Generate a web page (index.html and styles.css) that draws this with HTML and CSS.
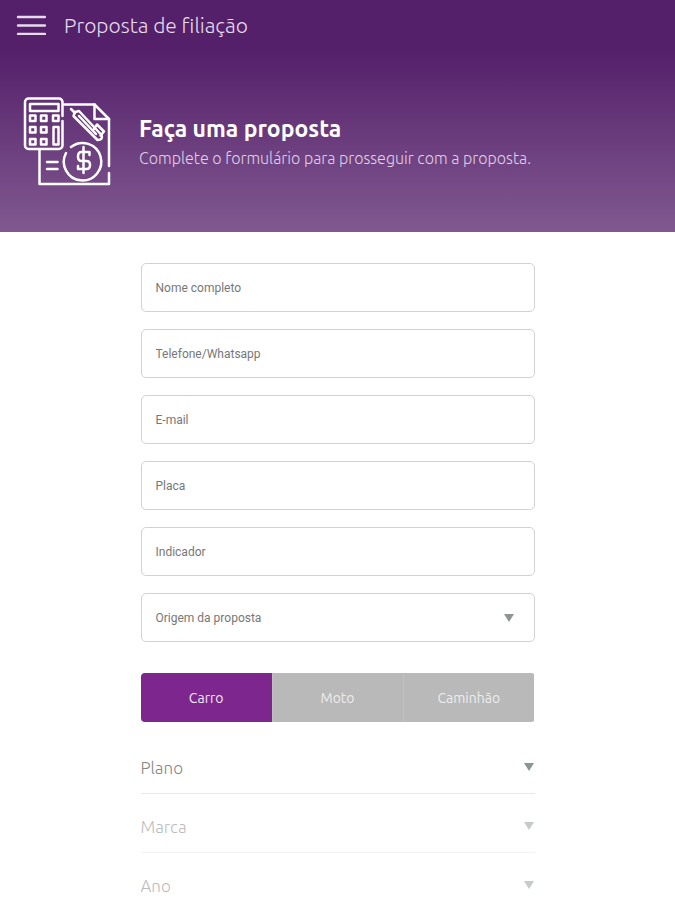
FILE: index.html
```html
<!DOCTYPE html>
<html lang="pt-BR">
<head>
  <meta charset="UTF-8" />
  <meta name="viewport" content="width=device-width, initial-scale=1.0"/>
  <title>Proposta de filiação</title>
  <link rel="stylesheet" href="styles.css">
</head>
<body>
  <header class="header">
    <div class="topbar">
      <button type="button" class="menu-button" aria-label="Menu">
        <svg width="30" height="20" viewBox="0 0 30 20" fill="none" stroke="currentColor" stroke-width="2.400" stroke-linecap="round">
          <path d="M2 2h27M2 10.500h27M2 19h27"/>
        </svg>
      </button>
      <h1 class="page-title">Proposta de filiação</h1>
    </div>

    <div class="hero">
      <svg class="hero-icon" width="88" height="90" viewBox="0 0 88 90" fill="none" stroke="currentColor" stroke-width="2.500" stroke-linecap="round" stroke-linejoin="round">
        <!-- calculator -->
        <path d="M39.500 20V6a3.500 3.500 0 0 0-3.500-3.500H5.500A3.500 3.500 0 0 0 2 6v43.500a3.500 3.500 0 0 0 3.500 3.500H36a3.500 3.500 0 0 0 3.500-3.500V25"/>
        <path d="M7 8h28.500v7H7z"/>
        <path d="M7 19.500h5.500V25H7zM18 19.500h5.500V25H18zM30 19.500h5.500V25H30z"/>
        <path d="M7 31h5.500v5.500H7zM18 31h5.500v5.500H18zM30.500 31h5v17.500h-5z"/>
        <path d="M7 43h5.500v5.500H7zM18 43h5.500v5.500H18z"/>
        <!-- sheet -->
        <path d="M41 8.500h30.500L86 23v47M86 77v11H16.500V54"/>
        <path d="M71.500 8.500V23H86"/>
        <!-- pen -->
        <path d="M48 13l4 4M50.500 20l1.500-4 4-1 22.500 24q2 5-4 5zM56 20l17 18"/>
        <path d="M71 33l3-4.500 7 7-3.500 4"/>
        <!-- coin -->
        <path d="M48 51a18.700 18.700 0 1 1-5 6"/>
        <path d="M60.500 51v26M66.500 59v-3H58.500q-3.500 0-3.500 4.500t3.500 4.500h5q3.500 0 3.500 4t-3.500 4H55v-3"/>
        <path d="M24 66h10.500M24 73h10.500"/>
      </svg>
      <div class="hero-text">
        <h2 class="hero-title">Faça uma proposta</h2>
        <p class="hero-subtitle">Complete o formulário para prosseguir com a proposta.</p>
      </div>
    </div>
  </header>

  <form class="form">
    <div class="fields">
      <input class="field" type="text" placeholder="Nome completo" aria-label="Nome completo">
      <input class="field" type="tel" placeholder="Telefone/Whatsapp" aria-label="Telefone/Whatsapp">
      <input class="field" type="email" placeholder="E-mail" aria-label="E-mail">
      <input class="field" type="text" placeholder="Placa" aria-label="Placa">
      <input class="field" type="text" placeholder="Indicador" aria-label="Indicador">
      <div class="select-wrapper">
        <select class="field" aria-label="Origem da proposta">
          <option>Origem da proposta</option>
        </select>
        <svg class="arrow arrow-field" viewBox="0 0 10 8"><path d="M0 0h10L5 8z"/></svg>
      </div>
    </div>

    <div class="vehicle-tabs">
      <button type="button" class="tab active">Carro</button>
      <button type="button" class="tab">Moto</button>
      <button type="button" class="tab">Caminhão</button>
    </div>

    <div class="options">
      <div class="select-wrapper option-row">
        <select class="option-select" aria-label="Plano">
          <option>Plano</option>
        </select>
        <svg class="arrow" viewBox="0 0 10 8"><path d="M0 0h10L5 8z"/></svg>
      </div>
      <div class="select-wrapper option-row inactive">
        <select class="option-select" aria-label="Marca" disabled>
          <option>Marca</option>
        </select>
        <svg class="arrow" viewBox="0 0 10 8"><path d="M0 0h10L5 8z"/></svg>
      </div>
      <div class="select-wrapper option-row inactive">
        <select class="option-select" aria-label="Ano" disabled>
          <option>Ano</option>
        </select>
        <svg class="arrow" viewBox="0 0 10 8"><path d="M0 0h10L5 8z"/></svg>
      </div>
    </div>
  </form>
</body>
</html>
```
FILE: styles.css
```css
*, *::before, *::after {
  box-sizing: border-box;
}

body {
  margin: 0;
  font-family: Ubuntu, "Noto Sans", sans-serif;
  background-color: #fff;
}

h1, h2, p {
  margin: 0;
}

.header {
  padding-bottom: 46px;
  background: linear-gradient(#54206a 0, #54206a 50px, #815990 100%);
  color: #fff;
}

.topbar {
  display: flex;
  align-items: center;
  gap: 18px;
  height: 50px;
  padding: 0 16px;
  color: #e6dbea;
}

.menu-button {
  display: flex;
  padding: 0;
  border: none;
  background: none;
  color: inherit;
  cursor: pointer;
}

.page-title {
  font-size: 21px;
  font-weight: 300;
  line-height: 28px;
}

.hero {
  display: flex;
  align-items: center;
  gap: 28px;
  padding: 46px 23px 0;
}

.hero-icon {
  flex: none;
}

.hero-text {
  padding-top: 4px;
}

.hero-title {
  font-size: 23px;
  font-weight: 700;
  line-height: 30px;
}

.hero-subtitle {
  color: #e0d0e8;
  font-size: 16px;
  font-weight: 300;
  line-height: 28px;
}

.form {
  max-width: 394px;
  margin: 0 auto;
  padding-top: 31px;
}

.fields {
  display: flex;
  flex-direction: column;
  gap: 17px;
}

.field {
  width: 100%;
  height: 49px;
  padding: 0 14px;
  border: 1px solid #d2d2d2;
  border-radius: 5px;
  outline: none;
  background-color: #fff;
  color: #777;
  font-family: Roboto, sans-serif;
  font-size: 12px;
  appearance: none;
}

.field::placeholder {
  color: #777;
}

.select-wrapper {
  display: grid;
  align-items: center;
}

.select-wrapper > * {
  grid-area: 1 / 1;
}

.arrow {
  justify-self: end;
  width: 10px;
  height: 8px;
  margin-right: 1px;
  fill: #8b9593;
  pointer-events: none;
}

.arrow-field {
  margin-right: 21px;
}

.vehicle-tabs {
  display: flex;
  margin-top: 31px;
  border-radius: 4px;
  overflow: hidden;
}

.tab {
  flex: 1;
  height: 49px;
  padding: 0;
  border: none;
  background-color: #b9b9b9;
  color: #ededed;
  font-family: inherit;
  font-size: 14px;
  cursor: pointer;
}

.tab + .tab {
  box-shadow: inset 1px 0 #c0c0c0;
}

.tab.active {
  background-color: #7d278e;
  color: #f4e8f6;
}

.options {
  margin-top: 13px;
}

.option-row {
  padding: 20px 0 14px;
  border-bottom: 1px solid #e9e9e9;
}

.option-row.inactive {
  border-color: #f3f3f3;
}

.option-row:last-child {
  padding-bottom: 0;
  border-bottom: none;
}

.option-select {
  width: 100%;
  height: 24px;
  padding: 0;
  border: none;
  outline: none;
  background: none;
  color: #858585;
  font-family: inherit;
  font-size: 17px;
  font-weight: 300;
  appearance: none;
}

.inactive .option-select {
  color: #bcbcbc;
  opacity: 1;
}

.inactive .arrow {
  fill: #c6cbca;
}
```
